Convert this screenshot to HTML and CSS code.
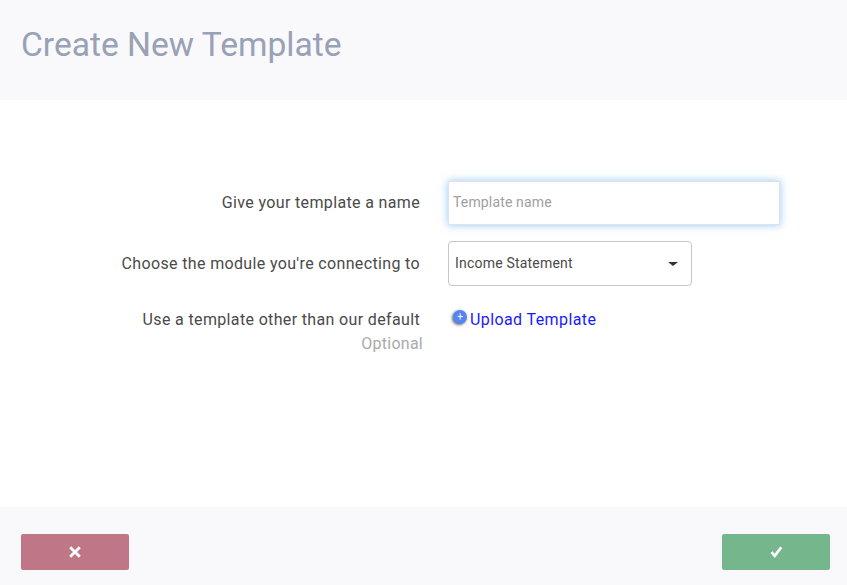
FILE: index.html
```html
<!DOCTYPE html>
<html lang="en">
<head>
    <meta charset="UTF-8">
    <title>Create New Template</title>
    <link rel="stylesheet" href="styles.css">
</head>
<body>
    <div class="page">
        <div class="header">
            <h1>Create New Template</h1>
        </div>

        <div class="content">
            <div class="row row-name">
                <label class="label">Give your template a name</label>
                <div class="field">
                    <input type="text" class="name-input" placeholder="Template name"/>
                </div>
            </div>
            <div class="row row-module">
                <label class="label">Choose the module you're connecting to</label>
                <div class="field">
                    <div class="select">
                        <span class="select-text">Income Statement</span>
                        <span class="caret"></span>
                    </div>
                </div>
            </div>
            <div class="row row-upload">
                <div class="label">
                    Use a template other than our default
                    <div class="optional">Optional</div>
                </div>
                <div class="field upload">
                    <span class="plus">+</span>
                    <a href="#" class="upload-link">Upload Template</a>
                </div>
            </div>
        </div>

        <div class="footer">
            <button class="btn cancel">
                <svg width="12" height="12" viewBox="0 0 12 12"><path d="M1.2 1.2l9.6 9.6M10.8 1.2l-9.6 9.6" stroke="#fff" stroke-width="2.8" fill="none"/></svg>
            </button>
            <button class="btn ok">
                <svg width="13" height="12" viewBox="0 0 13 12"><path d="M1.5 6.2l3.2 3.6 6.6-8.6" stroke="#fff" stroke-width="2.7" fill="none"/></svg>
            </button>
        </div>
    </div>
</body>
</html>
```

FILE: styles.css
```css
*{
    box-sizing:border-box;
}
body{
    margin:0;
    background:#fff;
    font-family:Roboto, sans-serif;
    color:#444;
}
.page{
    width:847px;
    height:585px;
    display:flex;
    flex-direction:column;
}
.header{
    height:100px;
    background:#f9f9fc;
    padding:0 21px;
    display:flex;
    align-items:center;
}
h1{
    margin:0 0 12px;
    font-size:33.6px;
    font-weight:400;
    color:#98a1b5;
}
.content{
    flex:1;
    padding-top:81px;
}
.row{
    display:flex;
    gap:28px;
}
.row-name{
    height:44px;
    align-items:center;
}
.row-module{
    margin-top:16px;
    height:45px;
    align-items:center;
}
.row-upload{
    margin-top:22px;
}
.label{
    width:420px;
    text-align:right;
    font-size:16px;
    line-height:24px;
    letter-spacing:.35px;
    color:#4a4a4a;
}
.optional{
    color:#aaa;
    margin-right:-3px;
    letter-spacing:.25px;
}
.name-input{
    display:block;
    width:332px;
    height:44px;
    padding:0 4px 2px;
    border:1px solid #dce3ec;
    outline:none;
    font-family:Roboto, sans-serif;
    font-size:14px;
    letter-spacing:.15px;
    box-shadow:0 0 8px rgba(102,175,233,.7);
}
.name-input::placeholder{
    color:#a0a0a0;
}
.select{
    width:244px;
    height:45px;
    padding:0 13px 0 6px;
    border:1px solid #c6c6c6;
    border-radius:4px;
    display:flex;
    align-items:center;
    justify-content:space-between;
    font-size:14px;
    letter-spacing:.2px;
    color:#4a4a4a;
}
.select-text{
    padding-bottom:2px;
}
.caret{
    width:0;
    height:0;
    border-left:5px solid transparent;
    border-right:5px solid transparent;
    border-top:4px solid #333;
}
.upload{
    display:flex;
    align-items:flex-start;
    padding-left:5px;
}
.plus{
    width:14px;
    height:14px;
    margin:2px 3px 0 0;
    border-radius:50%;
    background:#5585f5;
    box-shadow:-1px 1px 3px rgba(0,0,0,.6);
    color:#fff;
    font-size:10px;
    line-height:14px;
    text-align:center;
}
.upload-link{
    color:#1a1aff;
    text-decoration:none;
    font-size:16px;
    line-height:24px;
    letter-spacing:.4px;
}
.footer{
    height:78px;
    background:#f9f9fc;
    padding:0 17px 0 21px;
    display:flex;
    justify-content:space-between;
    align-items:flex-start;
}
.btn{
    width:108px;
    height:36px;
    margin-top:27px;
    border:0;
    border-radius:2px;
    display:flex;
    align-items:center;
    justify-content:center;
}
.cancel{
    background:#bf7686;
}
.ok{
    background:#75b68c;
}
```
